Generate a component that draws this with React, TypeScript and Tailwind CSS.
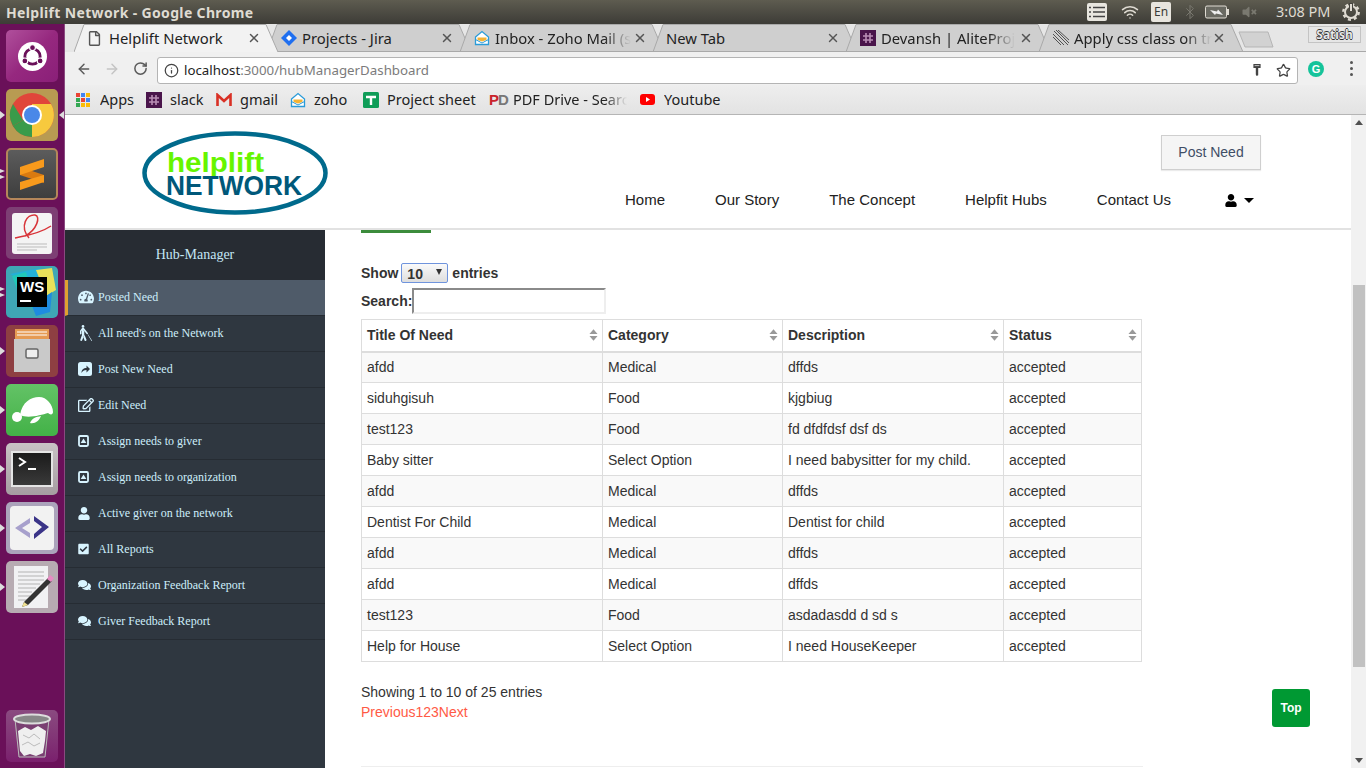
import { ArrowLeft, ArrowRight, RotateCw, Info, Star, X, Bluetooth, Wifi } from 'lucide-react';
import { FaTachometerAlt, FaBlind, FaRegEdit, FaUser, FaCheckSquare, FaComments, FaRegFile, FaVolumeMute } from 'react-icons/fa';
import type { ReactNode } from 'react';

const rows = [
  ['afdd', 'Medical', 'dffds'],
  ['siduhgisuh', 'Food', 'kjgbiug'],
  ['test123', 'Food', 'fd dfdfdsf dsf ds'],
  ['Baby sitter', 'Select Option', 'I need babysitter for my child.'],
  ['afdd', 'Medical', 'dffds'],
  ['Dentist For Child', 'Medical', 'Dentist for child'],
  ['afdd', 'Medical', 'dffds'],
  ['afdd', 'Medical', 'dffds'],
  ['test123', 'Food', 'asdadasdd d sd s'],
  ['Help for House', 'Select Option', 'I need HouseKeeper'],
];

function ShareIcon() {
  return (
    <svg width="14" height="14" viewBox="0 0 14 14">
      <rect width="14" height="14" rx="2.5" fill="currentColor" />
      <path d="M3.5 11c0-3.5 2-5 5-5V3.5L12 7l-3.5 3.5V8C6 8 4.5 9 3.5 11z" fill="#2f3740" />
    </svg>
  );
}

function AssignIcon() {
  return (
    <svg width="11" height="12" viewBox="0 0 11 12">
      <rect x="1" y="1" width="9" height="10" rx="1.2" fill="none" stroke="currentColor" strokeWidth="1.8" />
      <path d="M5.5 3.6 8.3 8H2.7z" fill="currentColor" />
    </svg>
  );
}

const menu: [string, ReactNode][] = [
  ['Posted Need', <FaTachometerAlt className="w-[16px] h-[16px]" />],
  ["All need's on the Network", <FaBlind className="w-[16px] h-[16px]" />],
  ['Post New Need', <ShareIcon />],
  ['Edit Need', <FaRegEdit className="w-[16px] h-[16px]" />],
  ['Assign needs to giver', <AssignIcon />],
  ['Assign needs to organization', <AssignIcon />],
  ['Active giver on the network', <FaUser className="w-[12px] h-[13px]" />],
  ['All Reports', <FaCheckSquare className="w-[11px] h-[12px]" />],
  ['Organization Feedback Report', <FaComments className="w-[13px] h-[12px]" />],
  ['Giver Feedback Report', <FaComments className="w-[13px] h-[12px]" />],
];

function SlackIcon({ size = 16 }: { size?: number }) {
  return (
    <svg width={size} height={size} viewBox="0 0 16 16">
      <rect width="16" height="16" fill="#4a154b" />
      <path d="M6 3v10M10 3v10M3 6h10M3 10h10" stroke="#b98db5" strokeWidth="1.6" />
    </svg>
  );
}

function ZohoIcon() {
  return (
    <svg width="16" height="16" viewBox="0 0 16 16">
      <path d="M1.5 7 8 1.5 14.5 7v7.5h-13z" fill="#fff" stroke="#2a9bd8" strokeWidth="1.3" />
      <path d="M3.5 7.5h9v2.5l-4.5 1.5-4.5-1.5z" fill="#f5b335" />
      <path d="M1.5 9.5 8 13l6.5-3.5" fill="none" stroke="#2a9bd8" strokeWidth="1" />
    </svg>
  );
}

function JiraIcon() {
  return (
    <svg width="16" height="16" viewBox="0 0 16 16">
      <path d="M8 0 16 8 8 16 0 8z" fill="#1f6ff0" />
      <path d="M8 5 11 8 8 11 5 8z" fill="#fff" />
    </svg>
  );
}

function Tab({ title, icon, active, fade }: { title: string; icon?: ReactNode; active?: boolean; fade?: boolean }) {
  return (
    <div className={`relative w-[204px] h-[28px] -mr-[11px] shrink-0 flex items-center ${active ? 'z-10' : ''}`}>
      <svg className="absolute inset-0" width="204" height="28" viewBox="0 0 204 28">
        <path d="M0 28 L10 .5 H192 L204 28 Z" fill={active ? '#f2f2f2' : '#cfcfcf'} />
        <path d="M0 28 L10 .5 H192 L204 28" fill="none" stroke="#a9a9a9" />
        {active ? null : <path d="M0 27.5 H204" stroke="#a9a9a9" />}
      </svg>
      <div className={`relative flex items-center ${icon ? 'pl-[14px]' : 'pl-[13px]'} w-[173px]`}>
        {icon && <span className="w-[21px] shrink-0 flex">{icon}</span>}
        <span
          className={`text-[14.8px] leading-[20px] text-[#222] whitespace-nowrap overflow-hidden ${fade ? '[mask-image:linear-gradient(to_right,black_80%,transparent)]' : ''}`}
          style={{ fontFamily: '"Noto Sans", sans-serif' }}
        >
          {title}
        </span>
      </div>
      <X className="relative w-[14px] h-[14px] text-[#555]" strokeWidth={2.5} />
    </div>
  );
}

function Bookmark({ w, icon, label, fade }: { w: string; icon: ReactNode; label: string; fade?: boolean }) {
  return (
    <div className={`${w} shrink-0 flex items-center`}>
      <span className="w-[24px] shrink-0 flex">{icon}</span>
      <span
        className={`text-[14.5px] text-[#222] whitespace-nowrap overflow-hidden ${fade ? 'w-[114px] [mask-image:linear-gradient(to_right,black_80%,transparent)]' : ''}`}
        style={{ fontFamily: '"Noto Sans", sans-serif' }}
      >
        {label}
      </span>
    </div>
  );
}

function Tile({ bg, children, pip, pips, activeApp }: { bg: string; children: ReactNode; pip?: boolean; pips?: boolean; activeApp?: boolean }) {
  return (
    <div className="relative h-[52px] w-[52px] shrink-0">
      {pip && <span className="absolute -left-[6px] top-[22px] w-0 h-0 border-y-[4px] border-y-transparent border-l-[5px] border-l-[#ddd]" />}
      {pips && (
        <span className="absolute -left-[6px] top-[21px] flex flex-col gap-[2px]">
          <span className="w-0 h-0 border-y-[2px] border-y-transparent border-l-[5px] border-l-[#ddd]" />
          <span className="w-0 h-0 border-y-[2px] border-y-transparent border-l-[5px] border-l-[#ddd]" />
        </span>
      )}
      {activeApp && <span className="absolute -right-[6px] top-[22px] w-0 h-0 border-y-[4px] border-y-transparent border-r-[5px] border-r-[#ddd]" />}
      <div className={`w-[52px] h-[52px] rounded-[5px] flex items-center justify-center overflow-hidden ${bg}`}>{children}</div>
    </div>
  );
}

function Launcher() {
  return (
    <div className="w-[65px] shrink-0 bg-[#6a1059] border-r border-[#8a4a80] flex flex-col gap-[7px] pl-[6px] pt-[6px] pb-[6px]">
      <Tile bg="bg-gradient-to-br from-[#b04f9c] via-[#96287f] to-[#8a1f78]">
        <svg width="29" height="29" viewBox="0 0 36 36">
          <circle cx="18" cy="18" r="18" fill="#fff" />
          <circle cx="18" cy="18" r="9.5" fill="none" stroke="#6a1059" strokeWidth="3.5" />
          <circle cx="18" cy="7" r="3.6" fill="#6a1059" stroke="#fff" strokeWidth="1.4" />
          <circle cx="8.5" cy="23.5" r="3.6" fill="#6a1059" stroke="#fff" strokeWidth="1.4" />
          <circle cx="27.5" cy="23.5" r="3.6" fill="#6a1059" stroke="#fff" strokeWidth="1.4" />
        </svg>
      </Tile>
      <Tile bg="bg-[#b89b52]" pip activeApp>
        <svg width="46" height="46" viewBox="0 0 46 46">
          <circle cx="23" cy="23" r="22" fill="#e0463a" />
          <path d="M23 23 L3.9 34 A22 22 0 0 0 23 45 Z" fill="#3a9b4a" />
          <path d="M23 23 L23 45 A22 22 0 0 0 42 12 L23 12 Z" fill="#f7c93e" />
          <path d="M3.9 34 A22 22 0 0 1 4 12 L14 28 Z" fill="#3a9b4a" />
          <circle cx="23" cy="23" r="10" fill="#fff" />
          <circle cx="23" cy="23" r="8" fill="#4a88e8" />
        </svg>
      </Tile>
      <Tile bg="bg-gradient-to-b from-[#5c5c5c] to-[#3e3e3e] border-2 border-[#b5875a]" pips>
        <svg width="24" height="31" viewBox="0 0 24 31">
          <path d="M0 8 L24 16 V24 L0 16Z" fill="#d97a10" />
          <path d="M24 0V8L0 16V8Z" fill="#f89a1c" />
          <path d="M24 16V23L0 31V23Z" fill="#f89a1c" />
        </svg>
      </Tile>
      <Tile bg="bg-[#7d3f74]">
        <svg width="42" height="42" viewBox="0 0 42 42">
          <rect x="1" y="1" width="40" height="41" rx="3" fill="#f4f4f4" />
          <path d="M4 26 C14 24 28 22 40 14 M18 26 C8 14 16 2 24 3 C30 4 26 18 14 24" fill="none" stroke="#d8353a" strokeWidth="1.5" />
          <path d="M6 32h30M6 35h30M6 38h20" stroke="#bbb" />
        </svg>
      </Tile>
      <Tile bg="bg-[#3fa6b5]" pips>
        <svg width="52" height="52" viewBox="0 0 52 52">
          <path d="M4 8 34 2 46 16 30 22Z" fill="#23b0d8" />
          <path d="M30 4 46 2 50 24 40 30Z" fill="#e8e05a" />
          <path d="M6 10 20 6 30 44 16 36Z" fill="#21c7b8" />
          <path d="M26 40 46 26 44 46 30 50Z" fill="#1e8be0" />
          <rect x="11" y="11" width="30" height="30" fill="#000" />
          <text x="14" y="26" fontSize="15" fontWeight="700" fill="#fff" style={{ fontFamily: '"Liberation Sans", sans-serif' }}>WS</text>
          <rect x="14" y="34" width="11" height="2" fill="#fff" />
        </svg>
      </Tile>
      <Tile bg="bg-[#8e3f42]" pip>
        <svg width="38" height="44" viewBox="0 0 38 44">
          <rect x="2" y="0" width="34" height="12" fill="#e59a52" />
          <path d="M4 3h30M4 6h30" stroke="#fff" />
          <rect x="1" y="10" width="36" height="33" fill="#c9c9c9" />
          <rect x="13" y="20" width="12" height="9" rx="1.5" fill="#eee" stroke="#666" strokeWidth="1.5" />
        </svg>
      </Tile>
      <Tile bg="bg-gradient-to-b from-[#63c266] to-[#42b247]" pip>
        <svg width="52" height="52" viewBox="0 0 52 52">
          <path d="M14 31 C16 18 25 13 33 13 C41 13 47 21 47 28 C47 31 44 31 42 29 C35 31 22 35 14 31Z" fill="#fff" />
          <ellipse cx="11" cy="33" rx="5" ry="5" fill="#fff" />
          <path d="M24 39 C26 34 30 33 35 32 C33 37 29 40 24 39Z" fill="#fff" />
        </svg>
      </Tile>
      <Tile bg="bg-gradient-to-b from-[#c9c2c5] to-[#a59da1]" pip>
        <div className="w-[42px] h-[36px] bg-gradient-to-b from-[#1b1b1b] to-[#3a3a3a] border-2 border-[#e5e5e5] flex items-start">
          <svg width="32" height="22" viewBox="0 0 32 22">
            <path d="M6 5l6 4-6 4" fill="none" stroke="#fff" strokeWidth="2" />
            <path d="M15 16h8" stroke="#fff" strokeWidth="2" />
          </svg>
        </div>
      </Tile>
      <Tile bg="bg-[#aba3bb]" pip>
        <div className="w-[44px] h-[44px] rounded-[4px] bg-[#f2f2f2] flex items-center justify-center">
          <svg width="38" height="24" viewBox="0 0 38 24">
            <path d="M17 2 2 12l15 10v-5L9 12l8-5z" fill="#a7a0cc" />
            <path d="M21 0 36 11 21 23v-5l8-7-8-6z" fill="#3b3488" />
          </svg>
        </div>
      </Tile>
      <Tile bg="bg-[#b7abb2]" pip>
        <svg width="44" height="46" viewBox="0 0 44 46">
          <rect x="4" y="2" width="34" height="42" fill="#f1f1f3" />
          <path d="M8 8h26M8 12h26M8 16h26M8 20h22M8 24h18M8 28h14M8 32h12M8 36h10" stroke="#9a9a9a" strokeWidth=".7" />
          <path d="M14 38 38 14l4 3-24 24-6 2z" fill="#333" />
          <path d="M37 15l3-4 4 3-3 4z" fill="#e78ac3" />
          <path d="M14 38l4 3-6 2z" fill="#f0e090" />
        </svg>
      </Tile>
      <div className="mt-auto">
        <Tile bg="bg-gradient-to-b from-[#8a4a80] to-[#7a1f6d]">
          <svg width="38" height="46" viewBox="0 0 38 46">
            <path d="M2 6 L6 44 H32 L36 6Z" fill="#7a3f72" stroke="#bbb" />
            <ellipse cx="19" cy="6" rx="18" ry="4.5" fill="#888" stroke="#ddd" strokeWidth="2" />
            <path d="M5 18l7-4 6 3 7-4 8 5-1 10-2 12-7 3-6-2-6 2-4-5-1-10z" fill="#efefef" />
            <path d="M10 22l6 3 5-4 6 5M9 32l6-3 6 4 6-3" fill="none" stroke="#bbb" />
          </svg>
        </Tile>
      </div>
    </div>
  );
}

function SortIcon() {
  return (
    <svg width="9" height="14" viewBox="0 0 10 14" className="shrink-0 -mr-[1px]">
      <path d="M5 0.5 9.5 6h-9zM5 13.5 .5 8h9z" fill="#999" />
    </svg>
  );
}

const sans = { fontFamily: '"Liberation Sans", Arial, sans-serif' };
const ui = { fontFamily: '"Noto Sans", sans-serif' };

export default function App() {
  return (
    <div className="h-screen w-screen overflow-hidden flex flex-col bg-white relative" style={sans}>
      {/* Ubuntu top bar */}
      <div className="h-[24px] shrink-0 bg-gradient-to-b from-[#5e5c50] to-[#3d3c37] flex items-center pl-[6px] pr-[6px]">
        <span className="text-[14px] font-bold text-[#dfdbd2] tracking-[0.35px]" style={ui}>Helplift Network - Google Chrome</span>
        <div className="ml-auto flex items-center text-[#dfdbd2]">
          <svg width="20" height="20" viewBox="0 0 20 20" className="mr-[13px]">
            <rect x="0" y="1" width="20" height="18" rx="2" fill="#e8e6df" />
            <path d="M6 5.5h12M6 10h12M6 14.5h12M2 5.5h2M2 10h2M2 14.5h2" stroke="#444" strokeWidth="1.5" />
          </svg>
          <Wifi className="w-[20px] h-[18px] mr-[11px]" strokeWidth={2} />
          <span className="w-[20px] h-[20px] bg-[#e8e5de] text-[#3c3b37] text-[12px] rounded-[2px] flex items-center justify-center mr-[11px]" style={ui}>En</span>
          <Bluetooth className="w-[16px] h-[18px] text-[#7a7970] mr-[7px]" strokeWidth={1.5} />
          <svg width="24" height="14" viewBox="0 0 24 14" className="mr-[12px]">
            <rect x=".5" y="1" width="21" height="12" rx="1.5" fill="#6a6a62" stroke="#dfdbd2" />
            <rect x="22" y="4" width="2" height="6" fill="#dfdbd2" />
            <path d="M5 5l7 1.5 1-2 5 5.5-7-1.5-1 1.5z" fill="#eee" />
          </svg>
          <FaVolumeMute className="w-[17px] h-[14px] text-[#7a7970] mr-[18px]" />
          <span className="text-[14.5px] w-[66px] text-[#dfdbd2]" style={ui}>3:08 PM</span>
          <svg width="18" height="18" viewBox="0 0 18 18">
            <circle cx="9" cy="9" r="7.7" fill="none" stroke="currentColor" strokeWidth="2.4" strokeDasharray="3 3.05" />
            <circle cx="9" cy="9" r="6" fill="none" stroke="currentColor" strokeWidth="2" />
            <path d="M9 0v8" stroke="#45443e" strokeWidth="4" />
            <path d="M9 1v7" stroke="currentColor" strokeWidth="2" />
          </svg>
        </div>
      </div>

      <div className="flex flex-1 min-h-0">
        <Launcher />

        <div className="flex-1 min-w-0 flex flex-col">
          {/* Tab strip */}
          <div className="h-[28px] shrink-0 bg-[#e6e6e6] flex pl-[9px] relative">
            <Tab active title="Helplift Network" icon={<FaRegFile className="w-[13px] h-[15px] text-[#555]" />} />
            <Tab title="Projects - Jira" icon={<JiraIcon />} />
            <Tab title="Inbox - Zoho Mail (s" fade icon={<ZohoIcon />} />
            <Tab title="New Tab" />
            <Tab title="Devansh | AliteProj" fade icon={<SlackIcon />} />
            <Tab
              title="Apply css class on tr"
              fade
              icon={
                <svg width="16" height="16" viewBox="0 0 16 16">
                  <path d="M1 1l14 14M3 0l13 13M0 4l11 11M5 0l11 10M0 7l8 8" stroke="#444" strokeWidth=".9" />
                </svg>
              }
            />
            <div className="flex-1 flex items-start border-b border-[#a9a9a9] pl-[6px] pt-[7px]">
              <svg width="36" height="17" viewBox="0 0 36 17" className="shrink-0">
                <path d="M1 1H30L35 16H7Z" fill="#d2d2d2" stroke="#b5b5b5" />
              </svg>
              <span
                className="ml-auto mr-[5px] -mt-[5px] w-[53px] h-[17px] border border-[#c4c4c4] text-[12px] leading-[15px] text-center text-[#e8e8e8] font-bold [text-shadow:-0.6px_0_0_#333,0.6px_0_0_#333,0_-0.6px_0_#333,0_0.6px_0_#333]"
                style={ui}
              >
                Satish
              </span>
            </div>
          </div>

          {/* Toolbar */}
          <div className="h-[33px] shrink-0 bg-[#f0f0f0] flex items-center pl-[11px] pr-[11px]">
            <ArrowLeft className="w-[16px] h-[16px] text-[#5a5a5a]" strokeWidth={2.2} />
            <ArrowRight className="w-[16px] h-[16px] text-[#c4c4c4] ml-[12px]" strokeWidth={2.2} />
            <RotateCw className="w-[15px] h-[15px] text-[#5a5a5a] ml-[13px]" strokeWidth={2.4} />
            <div className="ml-[9px] w-[1141px] h-[27px] mt-[3px] bg-white border border-[#b4b4b4] rounded-[3px] flex items-center pl-[6px] pr-[6px]">
              <Info className="w-[15px] h-[15px] text-[#444]" strokeWidth={2} />
              <span className="ml-[5px] pt-[2px] text-[13.3px] text-[#222]" style={ui}>localhost<span className="text-[#7b7b7b]">:3000/hubManagerDashboard</span></span>
              <svg width="8" height="12" viewBox="0 0 9 15" className="ml-auto mr-[15px]">
                <path d="M0 0h9v5H6v9l-2 1-1-2V5H0z" fill="#444" />
                <path d="M1.5 2h6" stroke="#ddd" />
              </svg>
              <Star className="w-[15px] h-[15px] text-[#444]" strokeWidth={2} />
            </div>
            <div className="ml-[10px] w-[16px] h-[16px] rounded-full bg-[#15c39a] text-white text-[11px] font-bold leading-[16px] text-center">G</div>
            <div className="ml-[26px] flex flex-col gap-[3px]">
              <span className="w-[3px] h-[3px] rounded-full bg-[#555]" />
              <span className="w-[3px] h-[3px] rounded-full bg-[#555]" />
              <span className="w-[3px] h-[3px] rounded-full bg-[#555]" />
            </div>
          </div>

          {/* Bookmarks bar */}
          <div className="h-[30px] shrink-0 bg-gradient-to-b from-[#eeeeee] to-[#e3e3e3] border-b border-[#b5b5b5] flex items-center pl-[11px]">
            <Bookmark
              w="w-[70px]"
              label="Apps"
              icon={
                <svg width="14" height="14" viewBox="0 0 14 14" className="-mr-[1px]">
                  <path d="M0 0h4v4H0z" fill="#ea4335" /><path d="M5 0h4v4H5z" fill="#4285f4" /><path d="M10 0h4v4h-4z" fill="#fbbc05" />
                  <path d="M0 5h4v4H0z" fill="#34a853" /><path d="M5 5h4v4H5z" fill="#ea4335" /><path d="M10 5h4v4h-4z" fill="#4285f4" />
                  <path d="M0 10h4v4H0z" fill="#34a853" /><path d="M5 10h4v4H5z" fill="#fbbc05" /><path d="M10 10h4v4h-4z" fill="#fbbc05" />
                </svg>
              }
            />
            <Bookmark w="w-[70px]" label="slack" icon={<SlackIcon />} />
            <Bookmark
              w="w-[74px]"
              label="gmail"
              icon={
                <svg width="16" height="14" viewBox="0 0 16 14">
                  <path d="M1.5 13V2L8 8l6.5-6v11" fill="none" stroke="#d93025" strokeWidth="2.6" />
                </svg>
              }
            />
            <Bookmark w="w-[73px]" label="zoho" icon={<ZohoIcon />} />
            <Bookmark
              w="w-[126px]"
              label="Project sheet"
              icon={
                <svg width="16" height="16" viewBox="0 0 16 16">
                  <rect width="16" height="16" rx="1.5" fill="#0f9d58" />
                  <path d="M3 5h10M8 5v8" stroke="#fff" strokeWidth="2.4" />
                </svg>
              }
            />
            <Bookmark
              w="w-[151px]"
              label="PDF Drive - Search"
              fade
              icon={
                <span className="text-[15px] font-bold leading-none tracking-[-1px]" style={sans}>
                  <span className="text-[#c9232b]">P</span>
                  <span className="text-[#777]">D</span>
                </span>
              }
            />
            <Bookmark
              w="w-[100px]"
              label="Youtube"
              icon={
                <svg width="15" height="11" viewBox="0 0 15 11">
                  <rect width="15" height="11" rx="3" fill="#f00" />
                  <path d="M6 3v5l4-2.5z" fill="#fff" />
                </svg>
              }
            />
          </div>

          {/* Page */}
          <div className="flex-1 min-h-0 flex">
            <div className="flex-1 min-w-0 flex flex-col">
              <header className="h-[115px] shrink-0 border-b-2 border-[#e2e2e2] flex justify-between bg-white">
                <div className="pl-[77px] pt-[16px]">
                  <svg width="188" height="84" viewBox="0 0 188 84">
                    <ellipse cx="93" cy="42" rx="90.5" ry="39.5" fill="#fff" stroke="#006a8c" strokeWidth="4.5" />
                    <text x="25" y="41" fontSize="28" fontWeight="700" fill="#66f500" textLength="97" lengthAdjust="spacingAndGlyphs" style={sans}>helplift</text>
                    <text x="24" y="64" fontSize="28" fontWeight="700" fill="#00587a" textLength="136" lengthAdjust="spacingAndGlyphs" style={sans}>NETWORK</text>
                  </svg>
                </div>
                <div className="flex flex-col items-end pr-[90px] pt-[20px]">
                  <button className="w-[100px] h-[35px] bg-[#f5f5f5] border border-[#cfcfcf] shadow-[0_1px_1px_rgba(0,0,0,0.08)] text-[14px] text-[#3f4e66]">Post Need</button>
                  <nav className="flex items-center gap-[50px] pr-[7px] mt-[20px] text-[15px] text-[#222] leading-[20px]">
                    <span>Home</span>
                    <span>Our Story</span>
                    <span>The Concept</span>
                    <span>Helpfit Hubs</span>
                    <span>Contact Us</span>
                    <span className="flex items-center gap-[7px] ml-[4px] text-black">
                      <FaUser className="w-[12px] h-[13px]" />
                      <span className="w-0 h-0 border-x-[5px] border-x-transparent border-t-[5px] border-t-black" />
                    </span>
                  </nav>
                </div>
              </header>

              <div className="flex-1 min-h-0 flex">
                {/* Sidebar */}
                <aside className="w-[260px] shrink-0 bg-[#2f3740] text-[#cdeefb]" style={{ fontFamily: '"Liberation Serif", serif' }}>
                  <div className="h-[50px] bg-[#272c33] flex items-center justify-center text-[14px] text-[#c4e6f5] pb-[2px]">Hub-Manager</div>
                  {menu.map(([label, icon], i) => (
                    <div
                      key={label}
                      className={`h-[36px] flex items-center text-[12px] border-b border-[#262c33] ${i === 0 ? 'bg-[#4f5b69] border-l-[3px] border-l-[#e0a030] pl-[10px]' : 'pl-[13px]'}`}
                    >
                      <span className="w-[20px] shrink-0 flex pb-[1px] text-[#d8f4ff]">{icon}</span>
                      <span className="pb-[2px]">{label}</span>
                    </div>
                  ))}
                </aside>

                {/* Main content */}
                <main className="flex-1 min-w-0 pl-[36px] relative bg-white">
                  <div className="w-[70px] h-[3px] bg-[#3c8c3c]" />
                  <div className="h-[24px] mt-[31px] flex items-start text-[14px] font-bold text-[#333] -translate-y-[1px]">
                    <span className="leading-[20px]">Show</span>
                    <span className="relative ml-[3px] mr-[4px] flex">
                      <select
                        defaultValue="10"
                        className="appearance-none w-[47px] h-[20px] pl-[5px] border border-[#6f94dd] rounded-[2px] bg-gradient-to-b from-[#fafafa] to-[#dedede] text-[14px] font-bold text-[#333]"
                      >
                        <option>10</option>
                        <option>25</option>
                      </select>
                      <span className="absolute right-[6px] top-[6px] w-0 h-0 border-x-[3px] border-x-transparent border-t-[6px] border-t-[#333]" />
                    </span>
                    <span className="leading-[20px]">entries</span>
                  </div>
                  <div className="flex items-center text-[14px] font-bold text-[#333] h-[26px]">
                    <label>Search:</label>
                    <input className="w-[194px] h-[26px] border-2 border-t-[#8a8a8a] border-l-[#8a8a8a] border-r-[#eee] border-b-[#eee] bg-white outline-none" />
                  </div>
                  <table className="mt-[5px] w-[780px] table-fixed border-collapse text-[14px] text-[#333]">
                    <colgroup>
                      <col className="w-[241px]" />
                      <col className="w-[180px]" />
                      <col className="w-[221px]" />
                      <col className="w-[138px]" />
                    </colgroup>
                    <thead>
                      <tr className="h-[32px]">
                        {['Title Of Need', 'Category', 'Description', 'Status'].map((h) => (
                          <th key={h} className="border border-[#ddd] border-b-2 px-[5px] py-0 font-bold text-left">
                            <div className="flex items-center justify-between">
                              <span>{h}</span>
                              <SortIcon />
                            </div>
                          </th>
                        ))}
                      </tr>
                    </thead>
                    <tbody>
                      {rows.map((r, i) => (
                        <tr key={i} className={`h-[31px] ${i % 2 === 0 ? 'bg-[#f9f9f9]' : 'bg-white'}`}>
                          {r.map((c, j) => (
                            <td key={j} className="border border-[#ddd] px-[5px] py-0">{c}</td>
                          ))}
                          <td className="border border-[#ddd] px-[5px] py-0">accepted</td>
                        </tr>
                      ))}
                    </tbody>
                  </table>
                  <div className="mt-[20px] text-[14px] leading-[20px] text-[#333]">Showing 1 to 10 of 25 entries</div>
                  <div className="text-[14px] leading-[20px] text-[#ff5a45]">Previous123Next</div>
                  <div className="mt-[44px] w-[782px] border-t border-[#eee]" />
                  <button className="absolute left-[947px] top-[459px] w-[38px] h-[38px] rounded-[3px] bg-[#009933] text-white text-[12px] font-bold">Top</button>
                </main>
              </div>
            </div>

            {/* Scrollbar */}
            <div className="w-[15px] shrink-0 bg-[#f1f1f1] flex flex-col">
              <div className="h-[15px] flex items-center justify-center">
                <span className="w-0 h-0 border-x-[4px] border-x-transparent border-b-[5px] border-b-[#505050]" />
              </div>
              <div className="flex-1 pt-[155px] pl-[2px]">
                <div className="w-[12px] h-[382px] bg-[#c1c1c1]" />
              </div>
              <div className="h-[15px] flex items-center justify-center">
                <span className="w-0 h-0 border-x-[4px] border-x-transparent border-t-[5px] border-t-[#505050]" />
              </div>
            </div>
          </div>
        </div>
      </div>
    </div>
  );
}
